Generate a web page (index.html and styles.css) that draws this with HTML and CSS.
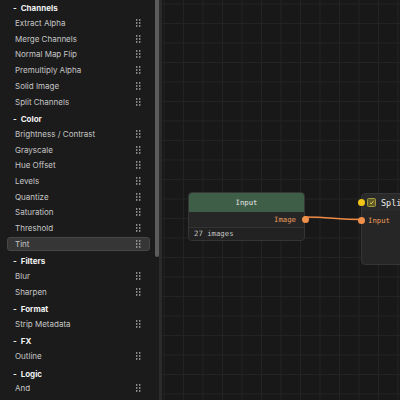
FILE: index.html
```html
<!DOCTYPE html>
<html>
<head>
<meta charset="utf-8">
<link rel="stylesheet" href="styles.css">
</head>
<body>
<aside class="sidebar">
  <div class="list">
    <section class="group first">
      <div class="head"><span class="minus">-</span>Channels</div>
      <div class="item"><span>Extract Alpha</span><svg class="grip" viewBox="0 0 5 8"><rect x="0" y="0" width="1.5" height="1.5"/><rect x="3.2" y="0" width="1.5" height="1.5"/><rect x="0" y="3.2" width="1.5" height="1.5"/><rect x="3.2" y="3.2" width="1.5" height="1.5"/><rect x="0" y="6.4" width="1.5" height="1.5"/><rect x="3.2" y="6.4" width="1.5" height="1.5"/></svg></div>
      <div class="item"><span>Merge Channels</span><svg class="grip" viewBox="0 0 5 8"><rect x="0" y="0" width="1.5" height="1.5"/><rect x="3.2" y="0" width="1.5" height="1.5"/><rect x="0" y="3.2" width="1.5" height="1.5"/><rect x="3.2" y="3.2" width="1.5" height="1.5"/><rect x="0" y="6.4" width="1.5" height="1.5"/><rect x="3.2" y="6.4" width="1.5" height="1.5"/></svg></div>
      <div class="item"><span>Normal Map Flip</span><svg class="grip" viewBox="0 0 5 8"><rect x="0" y="0" width="1.5" height="1.5"/><rect x="3.2" y="0" width="1.5" height="1.5"/><rect x="0" y="3.2" width="1.5" height="1.5"/><rect x="3.2" y="3.2" width="1.5" height="1.5"/><rect x="0" y="6.4" width="1.5" height="1.5"/><rect x="3.2" y="6.4" width="1.5" height="1.5"/></svg></div>
      <div class="item"><span>Premultiply Alpha</span><svg class="grip" viewBox="0 0 5 8"><rect x="0" y="0" width="1.5" height="1.5"/><rect x="3.2" y="0" width="1.5" height="1.5"/><rect x="0" y="3.2" width="1.5" height="1.5"/><rect x="3.2" y="3.2" width="1.5" height="1.5"/><rect x="0" y="6.4" width="1.5" height="1.5"/><rect x="3.2" y="6.4" width="1.5" height="1.5"/></svg></div>
      <div class="item"><span>Solid Image</span><svg class="grip" viewBox="0 0 5 8"><rect x="0" y="0" width="1.5" height="1.5"/><rect x="3.2" y="0" width="1.5" height="1.5"/><rect x="0" y="3.2" width="1.5" height="1.5"/><rect x="3.2" y="3.2" width="1.5" height="1.5"/><rect x="0" y="6.4" width="1.5" height="1.5"/><rect x="3.2" y="6.4" width="1.5" height="1.5"/></svg></div>
      <div class="item"><span>Split Channels</span><svg class="grip" viewBox="0 0 5 8"><rect x="0" y="0" width="1.5" height="1.5"/><rect x="3.2" y="0" width="1.5" height="1.5"/><rect x="0" y="3.2" width="1.5" height="1.5"/><rect x="3.2" y="3.2" width="1.5" height="1.5"/><rect x="0" y="6.4" width="1.5" height="1.5"/><rect x="3.2" y="6.4" width="1.5" height="1.5"/></svg></div>
    </section>
    <section class="group">
      <div class="head"><span class="minus">-</span>Color</div>
      <div class="item"><span>Brightness / Contrast</span><svg class="grip" viewBox="0 0 5 8"><rect x="0" y="0" width="1.5" height="1.5"/><rect x="3.2" y="0" width="1.5" height="1.5"/><rect x="0" y="3.2" width="1.5" height="1.5"/><rect x="3.2" y="3.2" width="1.5" height="1.5"/><rect x="0" y="6.4" width="1.5" height="1.5"/><rect x="3.2" y="6.4" width="1.5" height="1.5"/></svg></div>
      <div class="item"><span>Grayscale</span><svg class="grip" viewBox="0 0 5 8"><rect x="0" y="0" width="1.5" height="1.5"/><rect x="3.2" y="0" width="1.5" height="1.5"/><rect x="0" y="3.2" width="1.5" height="1.5"/><rect x="3.2" y="3.2" width="1.5" height="1.5"/><rect x="0" y="6.4" width="1.5" height="1.5"/><rect x="3.2" y="6.4" width="1.5" height="1.5"/></svg></div>
      <div class="item"><span>Hue Offset</span><svg class="grip" viewBox="0 0 5 8"><rect x="0" y="0" width="1.5" height="1.5"/><rect x="3.2" y="0" width="1.5" height="1.5"/><rect x="0" y="3.2" width="1.5" height="1.5"/><rect x="3.2" y="3.2" width="1.5" height="1.5"/><rect x="0" y="6.4" width="1.5" height="1.5"/><rect x="3.2" y="6.4" width="1.5" height="1.5"/></svg></div>
      <div class="item"><span>Levels</span><svg class="grip" viewBox="0 0 5 8"><rect x="0" y="0" width="1.5" height="1.5"/><rect x="3.2" y="0" width="1.5" height="1.5"/><rect x="0" y="3.2" width="1.5" height="1.5"/><rect x="3.2" y="3.2" width="1.5" height="1.5"/><rect x="0" y="6.4" width="1.5" height="1.5"/><rect x="3.2" y="6.4" width="1.5" height="1.5"/></svg></div>
      <div class="item"><span>Quantize</span><svg class="grip" viewBox="0 0 5 8"><rect x="0" y="0" width="1.5" height="1.5"/><rect x="3.2" y="0" width="1.5" height="1.5"/><rect x="0" y="3.2" width="1.5" height="1.5"/><rect x="3.2" y="3.2" width="1.5" height="1.5"/><rect x="0" y="6.4" width="1.5" height="1.5"/><rect x="3.2" y="6.4" width="1.5" height="1.5"/></svg></div>
      <div class="item"><span>Saturation</span><svg class="grip" viewBox="0 0 5 8"><rect x="0" y="0" width="1.5" height="1.5"/><rect x="3.2" y="0" width="1.5" height="1.5"/><rect x="0" y="3.2" width="1.5" height="1.5"/><rect x="3.2" y="3.2" width="1.5" height="1.5"/><rect x="0" y="6.4" width="1.5" height="1.5"/><rect x="3.2" y="6.4" width="1.5" height="1.5"/></svg></div>
      <div class="item"><span>Threshold</span><svg class="grip" viewBox="0 0 5 8"><rect x="0" y="0" width="1.5" height="1.5"/><rect x="3.2" y="0" width="1.5" height="1.5"/><rect x="0" y="3.2" width="1.5" height="1.5"/><rect x="3.2" y="3.2" width="1.5" height="1.5"/><rect x="0" y="6.4" width="1.5" height="1.5"/><rect x="3.2" y="6.4" width="1.5" height="1.5"/></svg></div>
      <div class="item active"><span>Tint</span><svg class="grip" viewBox="0 0 5 8"><rect x="0" y="0" width="1.5" height="1.5"/><rect x="3.2" y="0" width="1.5" height="1.5"/><rect x="0" y="3.2" width="1.5" height="1.5"/><rect x="3.2" y="3.2" width="1.5" height="1.5"/><rect x="0" y="6.4" width="1.5" height="1.5"/><rect x="3.2" y="6.4" width="1.5" height="1.5"/></svg></div>
    </section>
    <section class="group">
      <div class="head"><span class="minus">-</span>Filters</div>
      <div class="item"><span>Blur</span><svg class="grip" viewBox="0 0 5 8"><rect x="0" y="0" width="1.5" height="1.5"/><rect x="3.2" y="0" width="1.5" height="1.5"/><rect x="0" y="3.2" width="1.5" height="1.5"/><rect x="3.2" y="3.2" width="1.5" height="1.5"/><rect x="0" y="6.4" width="1.5" height="1.5"/><rect x="3.2" y="6.4" width="1.5" height="1.5"/></svg></div>
      <div class="item"><span>Sharpen</span><svg class="grip" viewBox="0 0 5 8"><rect x="0" y="0" width="1.5" height="1.5"/><rect x="3.2" y="0" width="1.5" height="1.5"/><rect x="0" y="3.2" width="1.5" height="1.5"/><rect x="3.2" y="3.2" width="1.5" height="1.5"/><rect x="0" y="6.4" width="1.5" height="1.5"/><rect x="3.2" y="6.4" width="1.5" height="1.5"/></svg></div>
    </section>
    <section class="group">
      <div class="head"><span class="minus">-</span>Format</div>
      <div class="item"><span>Strip Metadata</span><svg class="grip" viewBox="0 0 5 8"><rect x="0" y="0" width="1.5" height="1.5"/><rect x="3.2" y="0" width="1.5" height="1.5"/><rect x="0" y="3.2" width="1.5" height="1.5"/><rect x="3.2" y="3.2" width="1.5" height="1.5"/><rect x="0" y="6.4" width="1.5" height="1.5"/><rect x="3.2" y="6.4" width="1.5" height="1.5"/></svg></div>
    </section>
    <section class="group">
      <div class="head"><span class="minus">-</span>FX</div>
      <div class="item"><span>Outline</span><svg class="grip" viewBox="0 0 5 8"><rect x="0" y="0" width="1.5" height="1.5"/><rect x="3.2" y="0" width="1.5" height="1.5"/><rect x="0" y="3.2" width="1.5" height="1.5"/><rect x="3.2" y="3.2" width="1.5" height="1.5"/><rect x="0" y="6.4" width="1.5" height="1.5"/><rect x="3.2" y="6.4" width="1.5" height="1.5"/></svg></div>
    </section>
    <section class="group">
      <div class="head"><span class="minus">-</span>Logic</div>
      <div class="item"><span>And</span><svg class="grip" viewBox="0 0 5 8"><rect x="0" y="0" width="1.5" height="1.5"/><rect x="3.2" y="0" width="1.5" height="1.5"/><rect x="0" y="3.2" width="1.5" height="1.5"/><rect x="3.2" y="3.2" width="1.5" height="1.5"/><rect x="0" y="6.4" width="1.5" height="1.5"/><rect x="3.2" y="6.4" width="1.5" height="1.5"/></svg></div>
    </section>
  </div>
  <div class="track"><div class="thumb"></div></div>
</aside>
<main class="canvas">
  <svg class="wires" width="238" height="400" viewBox="162 0 238 400">
    <path d="M304 217 C 332 217, 334 219.5, 362 219.5" fill="none" stroke="#ef8a45" stroke-width="1.6"/>
  </svg>
  <div class="node node-input">
    <div class="node-head">Input</div>
    <div class="node-body out-row"><span class="port-label">Image</span><span class="port port-out"></span></div>
    <div class="node-foot">27 images</div>
  </div>
  <div class="node node-split">
    <div class="split-head"><span class="dot-yellow"></span><span class="check"><svg viewBox="0 0 9 9" width="9" height="9"><path d="M2.3 4.8 L3.8 6.2 L6.7 2.8" fill="none" stroke="#f0d34a" stroke-width="1.1"/></svg></span><span class="split-title">Split Channels</span></div>
    <div class="in-row"><span class="port port-in"></span><span class="port-label">Input</span></div>
  </div>
</main>
</body>
</html>
```

FILE: styles.css
```css
* { box-sizing: border-box; }
html, body { margin: 0; padding: 0; }
body {
  width: 400px;
  height: 400px;
  overflow: hidden;
  display: flex;
  background: #181818;
  font-family: Inter, "Noto Sans", sans-serif;
}
.sidebar {
  width: 162px;
  height: 400px;
  flex: none;
  display: flex;
  background: #1b1b1b;
  border-right: 3px solid #2b2b2b;
}
.list {
  width: 155px;
  padding-top: 1.3px;
  display: flex;
  flex-direction: column;
}
.group {
  display: flex;
  flex-direction: column;
  margin-top: 1.8px;
}
.group.first { margin-top: 0; }
.head {
  height: 14px;
  line-height: 14px;
  margin-bottom: 0.8px;
  padding-left: 13px;
  font-size: 8px;
  font-weight: 700;
  color: #f2f2f2;
  display: flex;
}
.minus {
  width: 7.7px;
}
.item {
  height: 14px;
  margin: 0 5px 1.7px 7px;
  padding: 0 8.5px 0 8px;
  display: flex;
  align-items: center;
  justify-content: space-between;
  font-size: 8px;
  color: #c6c6c6;
  border: 1px solid transparent;
  border-radius: 3px;
  padding-left: 7px;
}
.item.active {
  background: #363636;
  border-color: #474747;
}
.grip {
  width: 4.7px;
  height: 8px;
  fill: #b4b4b4;
}
.track {
  width: 4px;
}
.thumb {
  width: 4px;
  height: 257px;
  background: #5c5c5c;
  border-radius: 0 0 2px 2px;
}
.canvas {
  flex: 1;
  position: relative;
  height: 400px;
  background-color: #181818;
  background-image:
    linear-gradient(to right, #232323 1px, transparent 1px),
    linear-gradient(to bottom, #232323 1px, transparent 1px);
  background-size: 19.5px 19.5px;
  background-position: 1.5px 3.5px;
  overflow: hidden;
}
.wires {
  position: absolute;
  left: 0;
  top: 0;
  z-index: 2;
}
.node {
  position: absolute;
  background: #262626;
  border: 1px solid #353535;
  border-radius: 4px;
  font-family: "DejaVu Sans Mono", "Liberation Mono", monospace;
  font-size: 7.3px;
  display: flex;
  flex-direction: column;
}
.node-input {
  left: 26px;
  top: 192px;
  width: 117px;
  height: 49px;
}
.node-head {
  height: 18.5px;
  background: #3f5e48;
  color: #e6e6e6;
  display: flex;
  align-items: center;
  justify-content: center;
  border-radius: 3px 3px 0 0;
}
.out-row {
  height: 16px;
  display: flex;
  align-items: center;
  justify-content: flex-end;
  position: relative;
  border-bottom: 1px solid #333;
  padding-right: 8px;
}
.port-label {
  color: #eb9a5c;
}
.port {
  position: absolute;
  width: 7px;
  height: 7px;
  border-radius: 50%;
  background: #f0904a;
  z-index: 3;
}
.port-out {
  right: -4.5px;
  top: 4.5px;
}
.node-foot {
  flex: 1;
  background: #222222;
  color: #c4c4c4;
  display: flex;
  align-items: center;
  padding-left: 5px;
  border-radius: 0 0 3px 3px;
}
.node-split {
  left: 199px;
  top: 193px;
  width: 110px;
  height: 72px;
  background: #262626;
}
.split-head {
  height: 17px;
  display: flex;
  align-items: center;
  position: relative;
  padding-left: 4.5px;
  background: #2a2a2a;
  border-radius: 3px 3px 0 0;
}
.dot-yellow {
  position: absolute;
  left: -4.5px;
  top: 5px;
  width: 7px;
  height: 7px;
  border-radius: 50%;
  background: #f2c518;
}
.check {
  width: 9.5px;
  height: 9.5px;
  background: #5e5a2a;
  border: 1px solid #a39a3c;
  border-radius: 1.5px;
  display: flex;
  align-items: center;
  justify-content: center;
}
.check svg { display: block; }
.split-title {
  margin-left: 5px;
  font-size: 8.5px;
  color: #ececec;
  white-space: nowrap;
}
.in-row {
  height: 18px;
  display: flex;
  align-items: center;
  position: relative;
  padding-left: 6px;
}
.port-in {
  left: -4.5px;
  top: 5.5px;
}
```
